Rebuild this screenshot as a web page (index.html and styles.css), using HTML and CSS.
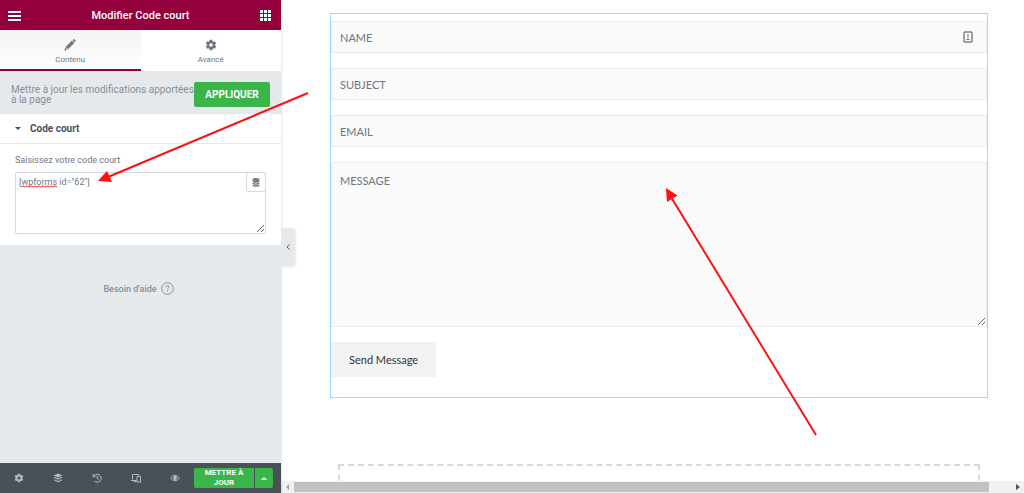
FILE: index.html
```html
<!DOCTYPE html>
<html lang="fr">
<head>
  <meta charset="UTF-8" />
  <meta name="viewport" content="width=device-width, initial-scale=1.0" />
  <title>Modifier Code court</title>
  <link rel="stylesheet" href="styles.css">
</head>
<body>
  <aside class="panel">
    <header class="panel-header">
      <button type="button" class="icon-btn" aria-label="Menu">
        <svg width="13" height="11" viewBox="0 0 13 11" fill="#fff"><path d="M0 1h13v2H0zM0 5h13v2H0zM0 9h13v2H0z"/></svg>
      </button>
      <h1>Modifier Code court</h1>
      <button type="button" class="icon-btn" aria-label="Widgets">
        <svg width="11" height="11" viewBox="0 0 11 11" fill="#fff"><path d="M0 0h3v3H0zM4 0h3v3H4zM8 0h3v3H8zM0 4h3v3H0zM4 4h3v3H4zM8 4h3v3H8zM0 8h3v3H0zM4 8h3v3H4zM8 8h3v3H8z"/></svg>
      </button>
    </header>

    <nav class="tabs">
      <button type="button" class="tab active">
        <svg width="12" height="12" viewBox="0 0 12 12" fill="#6d7882"><path d="M8.6 1 9.3.4q.6-.6 1.2 0l1 1q.6.6 0 1.2l-.7.7zM8 1.6 10.3 4 4 10.3 1.6 8zM1.1 8.6l2.3 2.3L.4 11.6z"/></svg>
        Contenu
      </button>
      <button type="button" class="tab">
        <svg width="12" height="12" viewBox="0 0 12 12" fill="#6d7882" fill-rule="evenodd"><path d="M4.7.8h2.6l.3 1.5.9.5 1.4-.5 1.3 2.2-1.2 1v1l1.2 1-1.3 2.2-1.4-.5-.9.5-.3 1.5H4.7l-.3-1.5-.9-.5-1.4.5L.8 7.500l1.2-1v-1l-1.2-1 1.3-2.2 1.4.5.9-.5zM6 4.2a1.8 1.8 0 1 0 0 3.6 1.8 1.8 0 0 0 0-3.6z"/></svg>
        Avancé
      </button>
    </nav>

    <div class="notice">
      <p>Mettre à jour les modifications apportées à la page</p>
      <button type="button" class="apply">APPLIQUER</button>
    </div>

    <section class="section">
      <h2><span class="caret"></span>Code court</h2>
      <div class="control">
        <label for="shortcode">Saisissez votre code court</label>
        <div class="code-box">
          <textarea id="shortcode" spellcheck="false">[wpforms id="62"]</textarea>
          <svg class="squiggle" width="36" height="3" viewBox="0 0 36 3" fill="none" stroke="#e33"><path d="M0 2 2 1 4 2 6 1 8 2l2-1 2 1 2-1 2 1 2-1 2 1 2-1 2 1 2-1 2 1 2-1 2 1 2-1 2 1"/></svg>
          <button type="button" class="dynamic" aria-label="Balises dynamiques">
            <svg width="8" height="9" viewBox="0 0 8 9" fill="#6d7882"><ellipse cx="4" cy="1.5" rx="3.5" ry="1.5"/><path d="M.5 2.4q3.500 1.600 7 0v1.700q-3.500 1.600-7 0zM.5 4.700q3.500 1.600 7 0v1.400q-3.500 1.600-7 0zM.5 6.700q3.500 1.600 7 0v1.200q-3.500 1.800-7 0z"/></svg>
          </button>
        </div>
      </div>
    </section>

    <a class="help" href="#">Besoin d'aide
      <svg width="13" height="13" viewBox="0 0 13 13" fill="none" stroke="#859099"><circle cx="6.5" cy="6.5" r="5.8"/><path d="M4.9 5.3q0-1.6 1.6-1.6t1.6 1.4c0 1-1.6 1-1.6 2.2M6.5 8.3v1.2"/></svg>
    </a>

    <footer class="panel-footer">
      <div class="tools">
        <button type="button" class="icon-btn" aria-label="Réglages">
          <svg width="10" height="10" viewBox="0 0 12 12" fill="#b4bcc3" fill-rule="evenodd"><path d="M4.7.8h2.6l.3 1.5.9.5 1.4-.5 1.3 2.2-1.2 1v1l1.2 1-1.3 2.2-1.4-.5-.9.5-.3 1.5H4.7l-.3-1.5-.9-.5-1.4.5L.8 7.500l1.2-1v-1l-1.2-1 1.3-2.2 1.4.5.9-.5zM6 4.2a1.8 1.8 0 1 0 0 3.6 1.8 1.8 0 0 0 0-3.6z"/></svg>
        </button>
        <button type="button" class="icon-btn" aria-label="Navigateur">
          <svg width="10" height="10" viewBox="0 0 10 10" fill="#b4bcc3"><path d="M5 .5 9.5 2.500 5 4.500.5 2.500zM.5 4.500l1.3-.6L5 5.400l3.200-1.500 1.300.6L5 6.700zM.5 7l1.300-.6L5 7.900l3.200-1.500 1.300.6L5 9.200z"/></svg>
        </button>
        <button type="button" class="icon-btn" aria-label="Historique">
          <svg width="10" height="10" viewBox="0 0 10 10" fill="none" stroke="#b4bcc3"><path d="M1.5 3.500A4 4 0 1 1 2.200 8M1 1v2.700h2.700M5.200 2.800v2.500l1.600 1.200"/></svg>
        </button>
        <button type="button" class="icon-btn" aria-label="Mode responsive">
          <svg width="10" height="10" viewBox="0 0 10 10" fill="none" stroke="#b4bcc3"><path d="M1.5 6.500v-5h6.500v1M0 7.500h5.500M3 8.500h2.500M6 3.500h3.500v5.500H6z"/></svg>
        </button>
        <button type="button" class="icon-btn" aria-label="Prévisualiser">
          <svg width="10" height="8" viewBox="0 0 10 8" fill="none" stroke="#b4bcc3"><path d="M.6 4Q5-1.600 9.400 4 5 9.600.6 4z"/><circle cx="5" cy="4" r="1.6" fill="#b4bcc3"/></svg>
        </button>
      </div>
      <div class="publish">
        <button type="button" class="update">METTRE À JOUR</button>
        <button type="button" class="more" aria-label="Options d'enregistrement"><span class="caret up"></span></button>
      </div>
    </footer>

    <button type="button" class="collapse" aria-label="Masquer le panneau">
      <svg width="4" height="6" viewBox="0 0 4 6" fill="none" stroke="#556068"><path d="M3.5.5 1 3l2.500 2.500"/></svg>
    </button>
  </aside>

  <main class="preview">
    <div class="canvas">
      <form class="widget">
        <div class="field">
          <input type="text" placeholder="NAME" aria-label="Name">
          <svg class="autofill" width="10" height="12" viewBox="0 0 10 12" fill="none" stroke="#7d838b"><rect x="1" y="1" width="8" height="10" rx="1" stroke-width="1.5"/><circle cx="5" cy="4.200" r=".6"/><path d="M5 5v2.500M3.300 8.500h3.400"/></svg>
        </div>
        <input type="text" placeholder="SUBJECT" aria-label="Subject">
        <input type="email" placeholder="EMAIL" aria-label="Email">
        <textarea placeholder="MESSAGE" aria-label="Message"></textarea>
        <button type="submit">Send Message</button>
      </form>
      <div class="drop-area"></div>
    </div>
    <div class="scrollbar">
      <svg width="13" height="12" viewBox="0 0 13 12" fill="#a3a3a3"><path d="M8 3v6L5 6z"/></svg>
      <div class="track"><div class="thumb"></div></div>
      <svg width="13" height="12" viewBox="0 0 13 12" fill="#505050"><path d="M5 3v6l4-3z"/></svg>
    </div>
  </main>

  <svg class="arrows" width="1024" height="493" viewBox="0 0 1024 493" stroke="#ff1010" fill="#ff1010" stroke-width="2">
    <path d="M308 93 108 177"/>
    <path d="M98 181 107 171 112 182z" stroke="none"/>
    <path d="M816 435 671 197"/>
    <path d="M666 188 677.500 195.500 667 202z" stroke="none"/>
  </svg>
</body>
</html>
```

FILE: styles.css
```css
* {
  box-sizing: border-box;
}
body {
  margin: 0;
  display: flex;
  height: 100vh;
  overflow: hidden;
  font-family: Roboto, sans-serif;
  background: #fff;
  color: #556068;
}
button {
  font-family: inherit;
  border: none;
  background: none;
  padding: 0;
  cursor: pointer;
}
svg {
  display: block;
}
h1, h2, p {
  margin: 0;
}

/* Panel */
.panel {
  width: 281px;
  flex: none;
  position: relative;
  display: flex;
  flex-direction: column;
  background: #e6e9ec;
  box-shadow: 0 0 3px rgba(0,0,0,0.2);
}
.panel-header {
  height: 30px;
  padding: 0 10px 0 8px;
  display: flex;
  align-items: center;
  justify-content: space-between;
  background: #93003c;
}
.panel-header h1 {
  color: #fff;
  font-size: 11px;
  font-weight: 500;
}
.tabs {
  display: flex;
  height: 41px;
  background: #fff;
}
.tab {
  flex: 1;
  display: flex;
  flex-direction: column;
  align-items: center;
  gap: 4px;
  padding-top: 9px;
  font-size: 8px;
  line-height: 9px;
  color: #6d7882;
  border-bottom: 2px solid transparent;
}
.tab.active {
  border-color: #93003c;
  background: linear-gradient(#f3f3f4, #fff);
}
.notice {
  display: flex;
  align-items: center;
  padding: 11px 11px 7px;
}
.notice p {
  flex: 1;
  font-size: 10px;
  line-height: 10px;
  color: #859099;
}
.apply {
  width: 76px;
  height: 25px;
  border-radius: 2px;
  background: #39b54a;
  color: #fff;
  font-size: 10px;
  font-weight: 700;
}
.section {
  background: #fff;
}
.section h2 {
  display: flex;
  align-items: center;
  gap: 9px;
  height: 30px;
  padding-left: 15px;
  font-size: 10px;
  font-weight: 700;
  color: #495157;
  border-bottom: 1px solid #e6e9ec;
}
.caret {
  border: 3px solid transparent;
  border-top-color: #495157;
  border-bottom: none;
}
.caret.up {
  border-top: none;
  border-bottom: 3px solid #fff;
}
.control {
  padding: 10px 15px 11px;
  display: flex;
  flex-direction: column;
  gap: 6px;
}
.control label {
  font-size: 9px;
  line-height: 12px;
  color: #6d7882;
}
.code-box {
  position: relative;
}
.code-box textarea {
  display: block;
  width: 100%;
  height: 62px;
  padding: 3px;
  border: 1px solid #d5dadf;
  border-radius: 2px;
  font-family: Roboto, sans-serif;
  font-size: 9px;
  line-height: 12px;
  color: #6d7882;
}
.squiggle {
  position: absolute;
  left: 6px;
  top: 13px;
}
.dynamic {
  position: absolute;
  top: 0;
  right: 0;
  width: 20px;
  height: 20px;
  display: grid;
  place-items: center;
  border: 1px solid #d5dadf;
  border-radius: 2px;
}
.help {
  display: flex;
  align-items: center;
  justify-content: center;
  gap: 4px;
  margin-top: 37px;
  padding-right: 4px;
  font-size: 9px;
  font-weight: 500;
  color: #859099;
  text-decoration: none;
}
.panel-footer {
  display: flex;
  align-items: center;
  height: 30px;
  margin-top: auto;
  padding-right: 8px;
  background: #495157;
}
.tools {
  flex: 1;
  display: flex;
  justify-content: space-around;
}
.publish {
  display: flex;
  gap: 1px;
  height: 20px;
}
.update, .more {
  background: #39b54a;
  border-radius: 2px 0 0 2px;
  color: #fff;
}
.update {
  width: 60px;
  font-size: 8px;
  font-weight: 700;
  line-height: 10px;
}
.more {
  width: 18px;
  display: grid;
  place-items: center;
  border-radius: 0 2px 2px 0;
}
.collapse {
  position: absolute;
  left: 100%;
  top: 228px;
  width: 13px;
  height: 38px;
  display: grid;
  place-items: center;
  background: #e6e9ec;
  border-radius: 0 2px 2px 0;
  box-shadow: 2px 1px 3px rgba(0,0,0,0.1);
}

/* Preview */
.preview {
  flex: 1;
  min-width: 0;
  display: flex;
  flex-direction: column;
}
.canvas {
  flex: 1;
  min-height: 0;
  overflow: hidden;
  padding: 13px 36px 0 49px;
}
.widget {
  display: flex;
  flex-direction: column;
  gap: 15px;
  padding: 7px 0 20px;
  border: 1px solid #9fdcf5;
}
.widget input, .widget textarea {
  display: block;
  width: 100%;
  height: 32px;
  padding: 0 8px;
  border: 1px solid #ececec;
  background: #fafafa;
  font-family: Lato, sans-serif;
  font-size: 11px;
  border-radius: 0;
}
.widget textarea {
  height: 165px;
  padding: 11px 8px;
}
.widget ::placeholder {
  color: #70757e;
}
.field {
  position: relative;
}
.autofill {
  position: absolute;
  right: 14px;
  top: 10px;
}
.widget button {
  align-self: flex-start;
  height: 35px;
  padding: 0 18px;
  background: #f2f2f2;
  font-family: Lato, sans-serif;
  font-size: 11px;
  color: #32323c;
}
.drop-area {
  height: 80px;
  margin: 66px 8px 0;
  border: 2px dashed #d5dadf;
}
.scrollbar {
  display: flex;
  height: 12px;
  background: #f1f1f1;
}
.track {
  flex: 1;
  padding: 1px 0;
}
.thumb {
  width: 97%;
  height: 10px;
  background: #c1c1c1;
}

/* Pointers over the page */
.arrows {
  position: absolute;
  top: 0;
  left: 0;
  pointer-events: none;
}
```
